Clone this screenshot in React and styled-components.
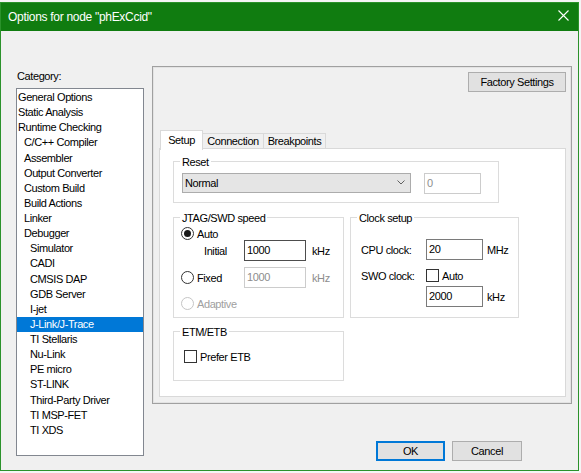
import React from "react";
import styled, { createGlobalStyle } from "styled-components";

const GlobalStyle = createGlobalStyle`
  html, body {
    margin: 0;
    background: #f5f5f5;
  }
  body {
    font-family: "Liberation Sans", Arial, sans-serif;
    font-size: 11px;
    letter-spacing: -0.4px;
    color: #000;
  }
  * {
    box-sizing: border-box;
  }
`;

const categories = [
  ["General Options", 0],
  ["Static Analysis", 0],
  ["Runtime Checking", 0],
  ["C/C++ Compiler", 1],
  ["Assembler", 1],
  ["Output Converter", 1],
  ["Custom Build", 1],
  ["Build Actions", 1],
  ["Linker", 1],
  ["Debugger", 1],
  ["Simulator", 2],
  ["CADI", 2],
  ["CMSIS DAP", 2],
  ["GDB Server", 2],
  ["I-jet", 2],
  ["J-Link/J-Trace", 2],
  ["TI Stellaris", 2],
  ["Nu-Link", 2],
  ["PE micro", 2],
  ["ST-LINK", 2],
  ["Third-Party Driver", 2],
  ["TI MSP-FET", 2],
  ["TI XDS", 2],
];

const tabs = [
  { label: "Setup", width: 43 },
  { label: "Connection", width: 62 },
  { label: "Breakpoints", width: 63 },
];

const App = () => {
  return (
    <>
      <GlobalStyle />
      <Window>
        <TitleBar>
          <Title>Options for node "phExCcid"</Title>
          <CloseButton>
            <svg width="11" height="11" viewBox="0 0 11 11">
              <path d="M0.5 0.5 L10.5 10.5 M10.5 0.5 L0.5 10.5" stroke="#fff" strokeWidth="1.1" />
            </svg>
          </CloseButton>
        </TitleBar>
        <Body>
          <CategoryColumn>
            <CategoryLabel>Category:</CategoryLabel>
            <ListBox>
              {categories.map(([name, level]) => (
                <ListItem key={name} $level={level} $selected={name === "J-Link/J-Trace"}>
                  {name}
                </ListItem>
              ))}
            </ListBox>
          </CategoryColumn>
          <MainColumn>
            <OptionsPanel>
              <PanelTop>
                <Button $w={98}>Factory Settings</Button>
              </PanelTop>
              <TabArea>
                <TabRow>
                  {tabs.map((t, i) => (
                    <Tab key={t.label} $w={t.width} $active={i === 0}>
                      {t.label}
                    </Tab>
                  ))}
                </TabRow>
                <TabPanel>
                  <Group $w={326} $h={42}>
                    <GroupTitle>Reset</GroupTitle>
                    <ResetRow>
                      <Select>
                        Normal
                        <svg width="8" height="5" viewBox="0 0 8 5">
                          <path d="M0.5 0.5 L4 4 L7.5 0.5" fill="none" stroke="#606060" strokeWidth="1" />
                        </svg>
                      </Select>
                      <TextBox $w={57} $disabled>
                        0
                      </TextBox>
                    </ResetRow>
                  </Group>

                  <GroupRow>
                    <Group $w={171} $h={101}>
                      <GroupTitle>JTAG/SWD speed</GroupTitle>
                      <FieldRow $pad={7} $mt={2} $h={13}>
                        <Radio $checked />
                        <OptionLabel>Auto</OptionLabel>
                      </FieldRow>
                      <FieldRow $pad={7} $mt={0} $h={21}>
                        <FieldLabel $w={63} $indent={23}>
                          Initial
                        </FieldLabel>
                        <TextBox $w={62} $strong>
                          1000
                        </TextBox>
                        <Unit>kHz</Unit>
                      </FieldRow>
                      <FieldRow $pad={7} $mt={6} $h={21}>
                        <FieldLabel $w={63} $indent={0}>
                          <Radio />
                          <OptionLabel>Fixed</OptionLabel>
                        </FieldLabel>
                        <TextBox $w={62} $disabled>
                          1000
                        </TextBox>
                        <Unit $disabled>kHz</Unit>
                      </FieldRow>
                      <FieldRow $pad={7} $mt={9} $h={13}>
                        <Radio $disabled />
                        <OptionLabel $disabled>Adaptive</OptionLabel>
                      </FieldRow>
                    </Group>

                    <Group $w={169} $h={101}>
                      <GroupTitle>Clock setup</GroupTitle>
                      <FieldRow $pad={0} $mt={14} $h={21}>
                        <FieldLabel $w={75} $indent={10}>
                          CPU clock:
                        </FieldLabel>
                        <TextBox $w={57}>20</TextBox>
                        <Unit $gap={4}>MHz</Unit>
                      </FieldRow>
                      <FieldRow $pad={0} $mt={9} $h={13}>
                        <FieldLabel $w={75} $indent={10}>
                          SWO clock:
                        </FieldLabel>
                        <CheckBox />
                        <OptionLabel>Auto</OptionLabel>
                      </FieldRow>
                      <FieldRow $pad={0} $mt={4} $h={21}>
                        <FieldLabel $w={75} $indent={10} />
                        <TextBox $w={57}>2000</TextBox>
                        <Unit $gap={4}>kHz</Unit>
                      </FieldRow>
                    </Group>
                  </GroupRow>

                  <Group $w={171} $h={50} $mt={13}>
                    <GroupTitle>ETM/ETB</GroupTitle>
                    <FieldRow $pad={10} $mt={11} $h={13}>
                      <CheckBox />
                      <OptionLabel>Prefer ETB</OptionLabel>
                    </FieldRow>
                  </Group>
                </TabPanel>
              </TabArea>
            </OptionsPanel>
            <ButtonRow>
              <Button $w={69} $default>
                OK
              </Button>
              <Button $w={70}>Cancel</Button>
            </ButtonRow>
          </MainColumn>
        </Body>
      </Window>
    </>
  );
};

export default App;

const Window = styled.div`
  width: 579px;
  height: 469px;
  margin-top: 2px;
  border: 1px solid #2b922b;
  background: #f0f0f0;
  display: flex;
  flex-direction: column;
`;

const TitleBar = styled.div`
  height: 28px;
  flex-shrink: 0;
  background: #107c10;
  display: flex;
  align-items: center;
  justify-content: space-between;
  padding-left: 7px;
`;

const Title = styled.div`
  color: #fff;
  font-size: 12px;
  letter-spacing: -0.3px;
`;

const CloseButton = styled.div`
  width: 30px;
  height: 28px;
  display: flex;
  align-items: center;
  justify-content: center;
  padding-bottom: 3px;
`;

const Body = styled.div`
  flex: 1;
  display: flex;
  gap: 8px;
  padding: 35px 0 0 15px;
`;

const CategoryColumn = styled.div`
  width: 128px;
  display: flex;
  flex-direction: column;
`;

const CategoryLabel = styled.div`
  margin: 3px 0 4px;
  padding-left: 1px;
  line-height: 15px;
`;

const ListBox = styled.div`
  height: 368px;
  background: #fff;
  border: 1px solid #828790;
  padding-top: 1px;
`;

const ListItem = styled.div`
  height: 15.13px;
  line-height: 15px;
  white-space: nowrap;
  padding-left: ${(p) => 1 + p.$level * 6}px;
  background: ${(p) => (p.$selected ? "#0078d7" : "transparent")};
  color: ${(p) => (p.$selected ? "#fff" : "#000")};
`;

const MainColumn = styled.div`
  width: 420px;
  display: flex;
  flex-direction: column;
`;

const OptionsPanel = styled.div`
  height: 338px;
  border: 1px solid #a0a0a0;
  box-shadow: inset 0 0 0 1px #e3e3e3;
  display: flex;
  flex-direction: column;
  padding: 5px 5px 6px 6px;
`;

const PanelTop = styled.div`
  display: flex;
  justify-content: flex-end;
`;

const Button = styled.div`
  width: ${(p) => p.$w}px;
  height: 20px;
  display: flex;
  align-items: center;
  justify-content: center;
  background: #e1e1e1;
  border: 1px solid ${(p) => (p.$default ? "#0078d7" : "#adadad")};
  box-shadow: ${(p) => (p.$default ? "inset 0 0 0 1px #0078d7" : "none")};
  padding-bottom: 1px;
`;

const TabArea = styled.div`
  flex: 1;
  display: flex;
  flex-direction: column;
  margin-top: 38px;
`;

const TabRow = styled.div`
  position: relative;
  z-index: 1;
  height: 19px;
  margin-bottom: -1px;
  padding-left: 1px;
  display: flex;
  align-items: flex-start;
`;

const Tab = styled.div`
  width: ${(p) => p.$w}px;
  height: ${(p) => (p.$active ? 20 : 15)}px;
  margin-top: ${(p) => (p.$active ? 0 : 3)}px;
  margin-left: -1px;
  &:first-child {
    margin-left: 0;
  }
  display: flex;
  align-items: center;
  justify-content: center;
  background: ${(p) => (p.$active ? "#fff" : "#f0f0f0")};
  border: 1px solid #d9d9d9;
  border-bottom: none;
  padding-bottom: ${(p) => (p.$active ? 2 : 0)}px;
  position: relative;
  z-index: ${(p) => (p.$active ? 2 : 1)};
`;

const TabPanel = styled.div`
  flex: 1;
  background: #fff;
  border: 1px solid #d9d9d9;
  padding: 12px 0 0 13px;
`;

const Group = styled.div`
  width: ${(p) => p.$w}px;
  height: ${(p) => p.$h}px;
  margin-top: ${(p) => p.$mt || 0}px;
  border: 1px solid #dcdcdc;
`;

const GroupTitle = styled.div`
  width: fit-content;
  height: 13px;
  line-height: 13px;
  margin: -6px 0 0 6px;
  padding: 0 2px;
  background: #fff;
  white-space: nowrap;
`;

const GroupRow = styled.div`
  display: flex;
  gap: 6px;
  margin-top: 14px;
`;

const ResetRow = styled.div`
  display: flex;
  align-items: flex-start;
  gap: 13px;
  margin-top: 4px;
  padding-left: 8px;
`;

const Select = styled.div`
  width: 229px;
  height: 20px;
  background: #e5e5e5;
  border: 1px solid #acacac;
  display: flex;
  align-items: center;
  justify-content: space-between;
  padding: 0 5px 1px 2px;
`;

const TextBox = styled.div`
  width: ${(p) => p.$w}px;
  height: 21px;
  flex-shrink: 0;
  background: #fff;
  border: 1px solid
    ${(p) => (p.$disabled ? "#cccccc" : p.$strong ? "#4d4d4d" : "#7a7a7a")};
  color: ${(p) => (p.$disabled ? "#8d8d8d" : "#000")};
  padding: 3px 0 0 2px;
  line-height: 13px;
`;

const FieldRow = styled.div`
  display: flex;
  align-items: center;
  height: ${(p) => p.$h}px;
  margin-top: ${(p) => p.$mt}px;
  padding-left: ${(p) => p.$pad}px;
`;

const FieldLabel = styled.div`
  width: ${(p) => p.$w}px;
  flex-shrink: 0;
  padding-left: ${(p) => p.$indent}px;
  display: flex;
  align-items: center;
  white-space: nowrap;
`;

const Unit = styled.div`
  margin-left: ${(p) => p.$gap || 6}px;
  color: ${(p) => (p.$disabled ? "#8d8d8d" : "#000")};
`;

const OptionLabel = styled.div`
  margin-left: 3px;
  white-space: nowrap;
  color: ${(p) => (p.$disabled ? "#a0a0a0" : "#000")};
`;

const Radio = styled.div`
  width: 13px;
  height: 13px;
  flex-shrink: 0;
  border-radius: 50%;
  background: #fff;
  border: 1px solid ${(p) => (p.$disabled ? "#c5c5c5" : "#333")};
  display: flex;
  align-items: center;
  justify-content: center;
  &::after {
    content: "";
    display: ${(p) => (p.$checked ? "block" : "none")};
    width: 7px;
    height: 7px;
    border-radius: 50%;
    background: #1a1a1a;
  }
`;

const CheckBox = styled.div`
  width: 13px;
  height: 13px;
  flex-shrink: 0;
  background: #fff;
  border: 1px solid #333;
`;

const ButtonRow = styled.div`
  display: flex;
  justify-content: flex-end;
  gap: 7px;
  margin-top: 37px;
  padding-right: 50px;
`;
